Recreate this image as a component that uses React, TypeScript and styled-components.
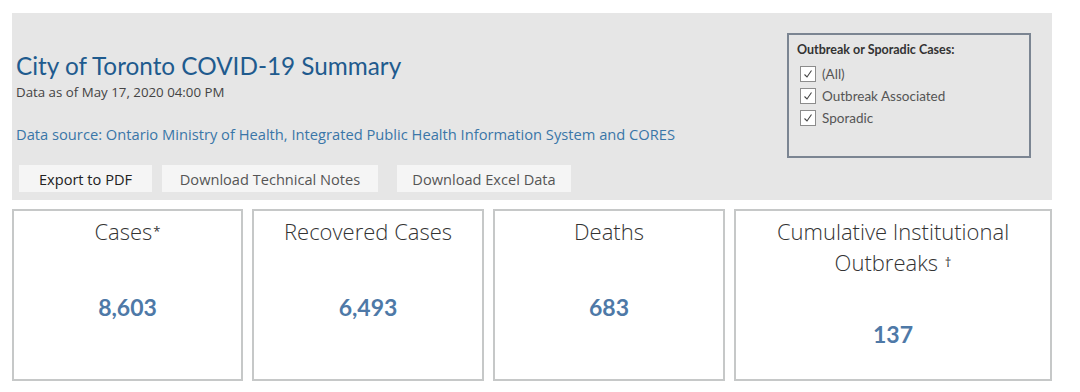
import styled, { createGlobalStyle } from 'styled-components';

const GlobalStyle = createGlobalStyle`
  body {
    margin: 0;
    background: #ffffff;
    font-family: "Open Sans", "Liberation Sans", sans-serif;
  }
`;

const Page = styled.div`
  width: 1040px;
  padding: 13px 0 0 12px;
`;

const Header = styled.div`
  height: 187px;
  background: #e6e6e6;
  display: flex;
  justify-content: space-between;
  padding: 0 21px 0 4px;
  box-sizing: border-box;
`;

const Intro = styled.div`
  display: flex;
  flex-direction: column;
  padding: 38px 0 8px;
`;

const Title = styled.h1`
  margin: 0;
  font-family: Lato, "Open Sans", sans-serif;
  font-size: 24.3px;
  line-height: 30px;
  font-weight: 400;
  color: #1f5b8e;
`;

const Stamp = styled.div`
  margin-top: 2px;
  font-size: 13.3px;
  line-height: 18px;
  color: #444;
`;

const Source = styled.div`
  margin-top: 23px;
  font-size: 14.7px;
  line-height: 20px;
  color: #3a76a8;
`;

const Buttons = styled.div`
  margin-top: auto;
  display: flex;
  gap: 10px;
  padding-left: 3px;
`;

const Button = styled.button<{ $width: number; $dark?: boolean; $shift?: number }>`
  width: ${({ $width }) => $width}px;
  height: 27px;
  margin-left: ${({ $shift }) => $shift ?? 0}px;
  border: none;
  background: #f5f5f5;
  font-family: inherit;
  font-size: 14.6px;
  color: ${({ $dark }) => ($dark ? '#222' : '#555')};
  padding: 0;
  cursor: pointer;
`;

const Filter = styled.div`
  margin-top: 20px;
  width: 244px;
  height: 125px;
  box-sizing: border-box;
  border: 2px solid #7b8592;
  padding: 7px 8px;
  font-family: Lato, "Open Sans", sans-serif;
`;

const FilterTitle = styled.div`
  font-size: 12.5px;
  font-weight: 700;
  color: #333;
  line-height: 16px;
  margin-bottom: 5px;
`;

const Option = styled.label`
  display: flex;
  align-items: center;
  gap: 6px;
  height: 22px;
  padding-left: 3px;
  font-size: 13.5px;
  color: #555;
`;

const Box = styled.span`
  width: 14px;
  height: 14px;
  border: 1px solid #8c8c8c;
  background: #fff;
  display: flex;
  align-items: center;
  justify-content: center;
`;

const Cards = styled.div`
  margin-top: 9px;
  display: grid;
  grid-template-columns: 231px 232px 232px 1fr;
  gap: 9px;
`;

const Card = styled.div`
  height: 172px;
  box-sizing: border-box;
  border: 2px solid #c6c8c8;
  display: flex;
  flex-direction: column;
  align-items: center;
  padding-top: 5px;
`;

const CardTitle = styled.div`
  font-size: 22px;
  line-height: 31px;
  font-weight: 300;
  color: #333;
  text-align: center;
`;

const Mark = styled.span`
  font-size: 13px;
  font-weight: 400;
  vertical-align: 4px;
  margin-left: 1px;
`;

const Value = styled.div<{ $offset: number }>`
  margin-top: ${({ $offset }) => $offset}px;
  font-family: Lato, "Open Sans", sans-serif;
  font-size: 23px;
  line-height: 30px;
  font-weight: 700;
  color: #4e79a7;
`;

const options = ['(All)', 'Outbreak Associated', 'Sporadic'];

const Check = () => (
  <Box>
    <svg width="10" height="10" viewBox="0 0 10 10">
      <path d="M1.5 5.5 L4 8 L8.5 1.5" fill="none" stroke="#444" strokeWidth="1.1" />
    </svg>
  </Box>
);

export default function App() {
  return (
    <>
      <GlobalStyle />
      <Page>
        <Header>
          <Intro>
            <Title>City of Toronto COVID-19 Summary</Title>
            <Stamp>Data as of May 17, 2020 04:00 PM</Stamp>
            <Source>
              Data source: Ontario Ministry of Health, Integrated Public Health Information System and CORES
            </Source>
            <Buttons>
              <Button $width={133} $dark>Export to PDF</Button>
              <Button $width={216}>Download Technical Notes</Button>
              <Button $width={174} $shift={9}>Download Excel Data</Button>
            </Buttons>
          </Intro>
          <Filter>
            <FilterTitle>Outbreak or Sporadic Cases:</FilterTitle>
            {options.map((o) => (
              <Option key={o}>
                <Check />
                {o}
              </Option>
            ))}
          </Filter>
        </Header>
        <Cards>
          <Card>
            <CardTitle>
              Cases<Mark>*</Mark>
            </CardTitle>
            <Value $offset={45}>8,603</Value>
          </Card>
          <Card>
            <CardTitle>Recovered Cases</CardTitle>
            <Value $offset={45}>6,493</Value>
          </Card>
          <Card>
            <CardTitle>Deaths</CardTitle>
            <Value $offset={45}>683</Value>
          </Card>
          <Card>
            <CardTitle>
              Cumulative Institutional
              <br />
              Outbreaks <Mark>†</Mark>
            </CardTitle>
            <Value $offset={41}>137</Value>
          </Card>
        </Cards>
      </Page>
    </>
  );
}
